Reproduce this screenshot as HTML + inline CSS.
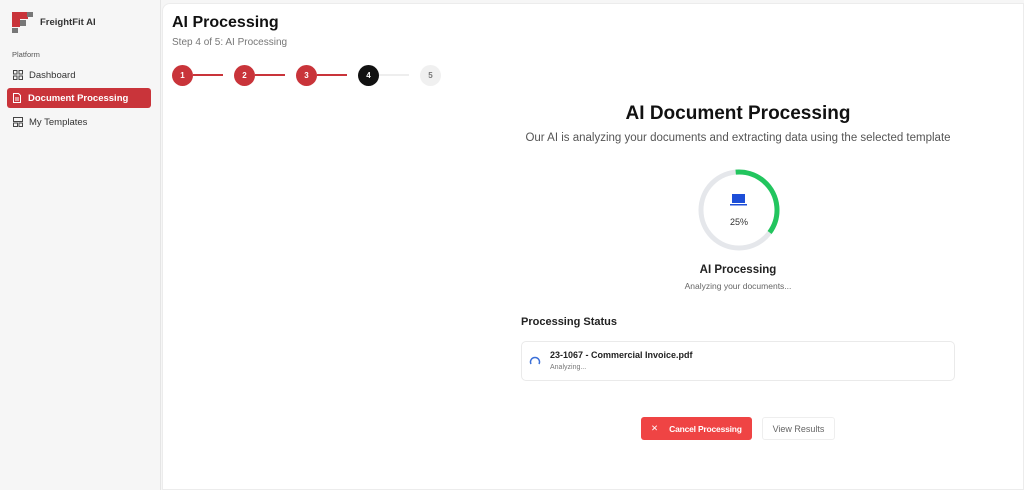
<!DOCTYPE html>
<html><head><style>
*{margin:0;padding:0;box-sizing:border-box}
body{width:1024px;height:490px;background:#f6f6f6;font-family:"Liberation Sans",sans-serif;position:relative;overflow:hidden;color:#111}
.abs{position:absolute}
.side{left:0;top:0;width:161px;height:490px;background:#f6f6f6;border-right:1px solid #e5e5e5}
.main{left:162px;top:3px;width:862px;height:487px;background:#fff;border-radius:8px 0 0 0;border:1px solid #ececec}
.nav{left:8px;width:143px;height:20px;font-size:9.5px;display:flex;align-items:center;padding-left:5px;color:#333;border-radius:3px}
.nav svg{margin-right:6px}
.step{width:21px;height:21px;border-radius:50%;top:65px;color:#fff;font-size:8px;font-weight:bold;display:flex;align-items:center;justify-content:center}
.ln{top:74px;height:1.5px;width:30px;background:#c9343a}
</style></head><body>
<div class="abs side">
  <div class="abs" style="left:12px;top:12px;width:8px;height:8px;background:#c9343a"></div>
  <div class="abs" style="left:12px;top:20px;width:8px;height:7px;background:#c9343a"></div>
  <div class="abs" style="left:20px;top:12px;width:8px;height:7px;background:#c9343a"></div>
  <div class="abs" style="left:27px;top:12px;width:6px;height:5px;background:#777"></div>
  <div class="abs" style="left:20px;top:20px;width:6px;height:6px;background:#777"></div>
  <div class="abs" style="left:12px;top:28px;width:6px;height:5px;background:#777"></div>
  <div class="abs" style="left:40px;top:17px;font-size:9.5px;font-weight:bold;color:#333">FreightFit AI</div>
  <div class="abs" style="left:12px;top:50px;font-size:7.5px;color:#555">Platform</div>
  <div class="abs nav" style="top:65px"><svg width="10" height="10" viewBox="0 0 10 10" fill="none" stroke="#444" stroke-width="1"><rect x="0.5" y="0.5" width="3.5" height="3.5"/><rect x="6" y="0.5" width="3.5" height="3.5"/><rect x="0.5" y="6" width="3.5" height="3.5"/><rect x="6" y="6" width="3.5" height="3.5"/></svg>Dashboard</div>
  <div class="abs nav" style="top:88px;background:#c9343a;color:#fff;font-weight:bold;left:7px;width:144px"><svg width="10" height="10" viewBox="0 0 10 10" fill="none" stroke="#fff" stroke-width="1"><path d="M1.5 .5h5l2 2v7h-7z M3 5h4 M3 7h4"/></svg>Document Processing</div>
  <div class="abs nav" style="top:112px"><svg width="10" height="10" viewBox="0 0 10 10" fill="none" stroke="#444" stroke-width="1"><rect x="0.5" y="0.5" width="9" height="4"/><rect x="0.5" y="6" width="4" height="3.5"/><rect x="6" y="6" width="3.5" height="3.5"/></svg>My Templates</div>
</div>
<div class="abs main"></div>
<div class="abs" style="left:172px;top:14px;font-size:16px;font-weight:bold;color:#111">AI Processing</div>
<div class="abs" style="left:172px;top:37px;font-size:10px;color:#777">Step 4 of 5: AI Processing</div>
<div class="abs step" style="left:172px;background:#c9343a">1</div>
<div class="abs ln" style="left:193px"></div>
<div class="abs step" style="left:234px;background:#c9343a">2</div>
<div class="abs ln" style="left:255px"></div>
<div class="abs step" style="left:296px;background:#c9343a">3</div>
<div class="abs ln" style="left:317px"></div>
<div class="abs step" style="left:358px;background:#111">4</div>
<div class="abs ln" style="left:379px;background:#eee"></div>
<div class="abs step" style="left:420px;background:#f0f0f0;color:#777">5</div>
<div class="abs" style="left:520px;width:436px;top:103px;text-align:center;font-size:19px;font-weight:bold;color:#111">AI Document Processing</div>
<div class="abs" style="left:500px;width:476px;top:132px;text-align:center;font-size:11.5px;color:#555">Our AI is analyzing your documents and extracting data using the selected template</div>
<svg class="abs" style="left:696px;top:167px" width="86" height="86" viewBox="0 0 86 86"><circle cx="43" cy="43" r="38" fill="none" stroke="#e5e7eb" stroke-width="5"/><circle cx="43" cy="43" r="38" fill="none" stroke="#22c55e" stroke-width="5" stroke-dasharray="87 300" transform="rotate(-95 43 43)"/>
<rect x="36" y="27" width="13" height="9" fill="#1d4ed8"/><rect x="34" y="37" width="17" height="1.5" fill="#1d4ed8"/></svg>
<div class="abs" style="left:696px;width:86px;top:217px;text-align:center;font-size:9px;color:#333">25%</div>
<div class="abs" style="left:620px;width:236px;top:264px;text-align:center;font-size:11.5px;font-weight:bold;color:#222">AI Processing</div>
<div class="abs" style="left:620px;width:236px;top:281px;text-align:center;font-size:8.5px;color:#666">Analyzing your documents...</div>
<div class="abs" style="left:521px;top:316px;font-size:11px;font-weight:bold;color:#222">Processing Status</div>
<div class="abs" style="left:521px;top:341px;width:434px;height:40px;border:1px solid #eaeaea;border-radius:5px"></div>
<svg class="abs" style="left:529px;top:355px" width="12" height="12" viewBox="0 0 12 12"><path d="M2 9A4.5 4.5 0 1 1 10 9" fill="none" stroke="#3b6fd8" stroke-width="1.5"/></svg>
<div class="abs" style="left:550px;top:350px;font-size:9px;font-weight:bold;color:#222">23-1067 - Commercial Invoice.pdf</div>
<div class="abs" style="left:550px;top:364px;font-size:7px;color:#777">Analyzing...</div>
<div class="abs" style="left:641px;top:417px;width:111px;height:23px;background:#ef4444;border-radius:3px;color:#fff;font-size:8.5px;font-weight:bold;display:flex;align-items:center;white-space:nowrap"><span style="margin-left:10px;margin-right:11px;font-weight:normal">✕</span><span style="letter-spacing:-0.2px">Cancel Processing</span></div>
<div class="abs" style="left:762px;top:417px;width:73px;height:23px;border:1px solid #eee;border-radius:3px;color:#666;font-size:9px;display:flex;align-items:center;justify-content:center">View Results</div>
</body></html>
